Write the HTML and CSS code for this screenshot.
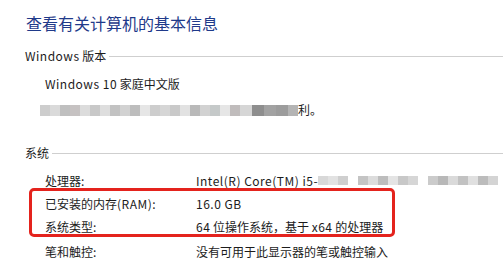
FILE: index.html
```html
<!DOCTYPE html>
<html lang="zh-CN">
<head>
<meta charset="utf-8">
<link rel="stylesheet" href="styles.css">
</head>
<body>
<div class="page">
  <h1 class="title">查看有关计算机的基本信息</h1>

  <div class="sec-head"><span class="sec-name"><span class="lat">Windows</span> 版本</span><span class="sec-line"></span></div>
  <div class="edition"><span class="lat">Windows 10</span> 家庭中文版</div>
  <div class="blur-row">
    <span class="blurs b-copy">
      <i></i><i></i><i></i><i></i><i></i><i></i><i></i><i></i><i></i><i></i><i></i><i></i><i></i><i></i><i></i><i></i><i></i><i></i><i></i><i></i><i></i><i></i><i></i><i></i><i></i>
    </span><span class="tail">利。</span>
  </div>

  <div class="sec-head sys"><span class="sec-name">系统</span><span class="sec-line"></span></div>
  <div class="rows">
    <div class="row"><span class="lbl">处理器:</span><span class="val"><span class="lat">Intel(R) Core(TM) i5-</span><span class="blurs b-cpu"><i></i><i></i><i></i><i></i><i></i><i></i><i></i><i></i><i></i><i></i><i></i><i></i><i></i><i></i><i></i><i></i><i></i><i></i></span></span></div>
    <div class="row"><span class="lbl">已安装的内存<span class="lat">(RAM):</span></span><span class="val"><span class="lat">16.0 GB</span></span></div>
    <div class="row"><span class="lbl">系统类型:</span><span class="val"><span class="lat">64</span>&nbsp;位操作系统，基于&nbsp;<span class="lat">x64</span>&nbsp;的处理器</span></div>
    <div class="row last"><span class="lbl">笔和触控:</span><span class="val">没有可用于此显示器的笔或触控输入</span></div>
    <div class="mark"></div>
  </div>
</div>
</body>
</html>
```

FILE: styles.css
```css
html, body {
  margin: 0;
  padding: 0;
  background: #ffffff;
}
body {
  font-family: "Noto Sans CJK SC", "Noto Sans", sans-serif;
  font-size: 12px;
  color: #1c1c1c;
  width: 503px;
  height: 277px;
  overflow: hidden;
}
.lat {
  letter-spacing: 0.5px;
}
.page {
  padding-top: 13px;
}
.title {
  margin: 0 0 0 26px;
  font-size: 16px;
  line-height: 20px;
  font-weight: normal;
  color: #1f3a8a;
}
.sec-head {
  display: flex;
  align-items: center;
  margin-top: 15px;
  padding-left: 25px;
  height: 16px;
}
.sec-name {
  line-height: 16px;
  white-space: nowrap;
}
.sec-line {
  flex: 1;
  height: 1px;
  background: #cfcfcf;
  margin-left: 3px;
  margin-top: 1px;
}
.edition {
  margin: 12px 0 0 45px;
  line-height: 16px;
}
.blur-row {
  display: flex;
  align-items: center;
  margin: 12px 0 0 40px;
  height: 12px;
}
.blurs {
  display: flex;
}
.blurs i {
  display: block;
  height: 11px;
  width: 10px;
  background: #d2d2d2;
}
.b-copy i:nth-child(1) { background: #cdcdcd; }
.b-copy i:nth-child(2) { background: #dadada; }
.b-copy i:nth-child(3) { background: #bfbfbf; }
.b-copy i:nth-child(4) { background: #c6c2c2; }
.b-copy i:nth-child(5) { background: #dcdcdc; }
.b-copy i:nth-child(6) { background: #c8c8c8; }
.b-copy i:nth-child(7) { background: #dedede; }
.b-copy i:nth-child(8) { background: #c2c2c2; }
.b-copy i:nth-child(9) { background: #d2d2d2; }
.b-copy i:nth-child(10) { background: #bdbdbd; }
.b-copy i:nth-child(11) { background: #e6e6e6; }
.b-copy i:nth-child(12) { background: #cdcdcd; }
.b-copy i:nth-child(13) { background: #d6d6d6; }
.b-copy i:nth-child(14) { background: #c9c9c9; }
.b-copy i:nth-child(15) { background: #e2e2e2; }
.b-copy i:nth-child(16) { background: #b9b9b9; }
.b-copy i:nth-child(17) { background: #d2d2d2; }
.b-copy i:nth-child(18) { background: #c5c9c9; }
.b-copy i:nth-child(19) { background: #e6e6e6; }
.b-copy i:nth-child(20) { background: #c0bcbc; }
.b-copy i:nth-child(21) { background: #d6d6d6; width: 12px; }
.b-copy i:nth-child(22) { background: #8e8e8e; width: 12px; }
.b-copy i:nth-child(23) { background: #a2a2a2; width: 12px; }
.b-copy i:nth-child(24) { background: #9c9c9c; width: 12px; }
.b-copy i:nth-child(25) { background: #b4b4b4; width: 10px; }
.tail {
  line-height: 12px;
  margin-left: 0;
}
.sys {
  margin-top: 29px;
}
.rows {
  position: relative;
  margin-top: 8px;
}
.row {
  display: flex;
  height: 23px;
  align-items: center;
  padding-left: 45px;
}
.row.last {
  margin-top: 2px;
}
.lbl {
  width: 151px;
  flex: none;
  white-space: nowrap;
}
.val {
  display: flex;
  align-items: center;
  white-space: nowrap;
}
.b-cpu i { height: 9px; width: 10px; }
.b-cpu i:nth-child(1) { background: #d8d8d8; }
.b-cpu i:nth-child(2) { background: #e2e2e2; }
.b-cpu i:nth-child(3) { background: #cfcfcf; }
.b-cpu i:nth-child(4) { background: #ffffff; }
.b-cpu i:nth-child(5) { background: #c4c4c4; }
.b-cpu i:nth-child(6) { background: #dcdcdc; }
.b-cpu i:nth-child(7) { background: #bdbdbd; }
.b-cpu i:nth-child(8) { background: #e4e4e4; }
.b-cpu i:nth-child(9) { background: #c8c8c8; }
.b-cpu i:nth-child(10) { background: #d6d6d6; }
.b-cpu i:nth-child(11) { background: #ffffff; }
.b-cpu i:nth-child(12) { background: #cbcbcb; }
.b-cpu i:nth-child(13) { background: #b8b8b8; }
.b-cpu i:nth-child(14) { background: #dadada; }
.b-cpu i:nth-child(15) { background: #c2c2c2; }
.b-cpu i:nth-child(16) { background: #e0e0e0; }
.b-cpu i:nth-child(17) { background: #bcbcbc; }
.b-cpu i:nth-child(18) { background: #d4d4d4; }
.mark {
  position: absolute;
  left: 29px;
  top: 19px;
  width: 360px;
  height: 43px;
  border: 3px solid #e4231d;
  border-radius: 5px;
  pointer-events: none;
}
```
